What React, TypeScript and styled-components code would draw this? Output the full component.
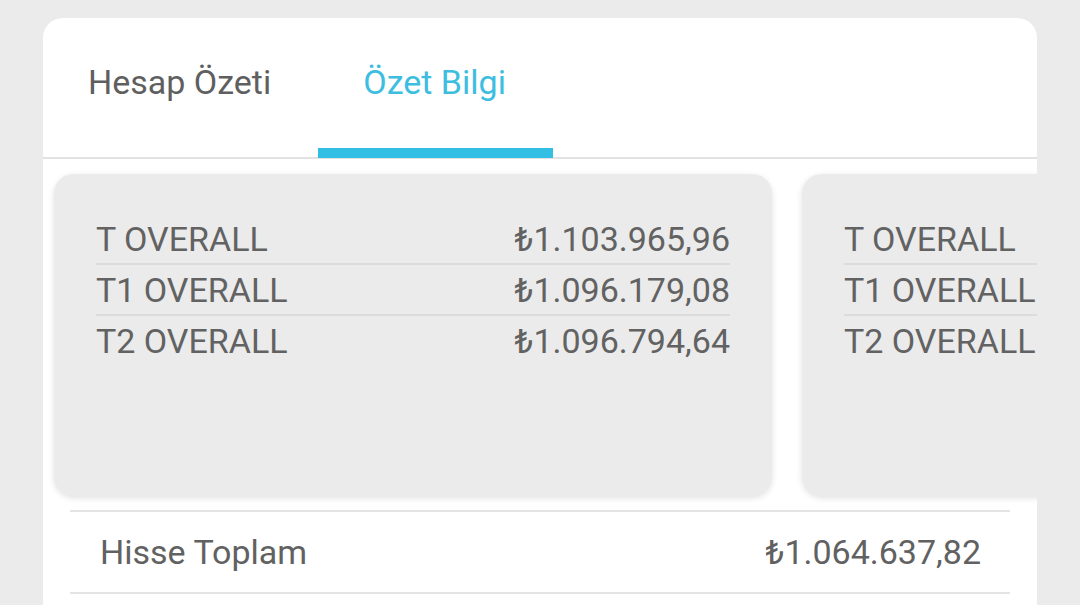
import styled, { createGlobalStyle } from "styled-components";

const GlobalStyle = createGlobalStyle`
  html, body {
    margin: 0;
    padding: 0;
    background: #ebebeb;
    font-family: Roboto, "Noto Sans", sans-serif;
    color: #616161;
  }
`;

const Page = styled.div`
  width: 1080px;
  height: 605px;
  overflow: hidden;
  padding: 18px 43px 0 43px;
  box-sizing: border-box;
`;

const Panel = styled.div`
  background: #fff;
  border-radius: 20px 20px 0 0;
  height: 620px;
  overflow: hidden;
`;

const TabBar = styled.div`
  display: flex;
  height: 139px;
  border-bottom: 2px solid #e2e2e2;
`;

const Tab = styled.div<{ $active?: boolean }>`
  position: relative;
  padding: 0 47px 12px 45px;
  display: flex;
  align-items: center;
  font-size: 34px;
  color: ${(p) => (p.$active ? "#3dbde0" : "#5f5f5f")};
  &::after {
    content: "";
    display: ${(p) => (p.$active ? "block" : "none")};
    position: absolute;
    left: 0;
    right: 0;
    bottom: -1px;
    height: 10px;
    background: #33bfe4;
  }
`;

const Carousel = styled.div`
  display: flex;
  gap: 30px;
  padding: 15px 0 14px 11px;
  overflow: hidden;
`;

const SummaryCard = styled.div`
  flex: 0 0 718px;
  height: 322px;
  box-sizing: border-box;
  padding: 40px 42px 0 42px;
  background: #ebebeb;
  border-radius: 20px;
  box-shadow: 0 2px 6px rgba(0, 0, 0, 0.12);
  overflow: hidden;
`;

const Row = styled.div`
  display: flex;
  justify-content: space-between;
  align-items: center;
  height: 49px;
  font-size: 34px;
  color: #626262;
  white-space: nowrap;
  & + & {
    border-top: 2px solid #dcdcdc;
  }
`;

const TotalList = styled.div`
  margin: 0 27px;
  border-top: 2px solid #e4e4e4;
`;

const TotalRow = styled.div`
  display: flex;
  justify-content: space-between;
  align-items: center;
  height: 80px;
  padding: 0 29px 0 30px;
  font-size: 34px;
  color: #616161;
  border-bottom: 2px solid #e4e4e4;
`;

const rows = [
  ["T OVERALL", "₺1.103.965,96"],
  ["T1 OVERALL", "₺1.096.179,08"],
  ["T2 OVERALL", "₺1.096.794,64"],
];

export default function App() {
  return (
    <>
      <GlobalStyle />
      <Page>
        <Panel>
          <TabBar>
            <Tab>Hesap Özeti</Tab>
            <Tab $active>Özet Bilgi</Tab>
          </TabBar>
          <Carousel>
            {[0, 1].map((i) => (
              <SummaryCard key={i}>
                {rows.map(([label, value]) => (
                  <Row key={label}>
                    <span>{label}</span>
                    <span>{value}</span>
                  </Row>
                ))}
              </SummaryCard>
            ))}
          </Carousel>
          <TotalList>
            <TotalRow>
              <span>Hisse Toplam</span>
              <span>₺1.064.637,82</span>
            </TotalRow>
          </TotalList>
        </Panel>
      </Page>
    </>
  );
}
